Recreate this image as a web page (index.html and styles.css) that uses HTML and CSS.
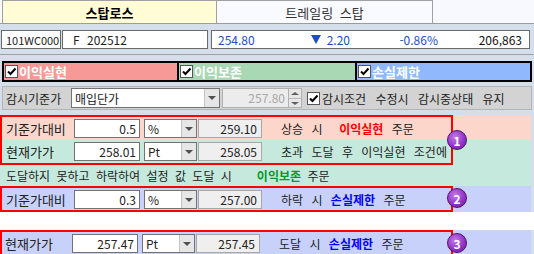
FILE: index.html
```html
<!DOCTYPE html>
<html lang="ko">
<head>
  <meta charset="UTF-8" />
  <title>스탑로스</title>
  <link rel="stylesheet" href="styles.css">
</head>
<body>
  <div class="tabs">
    <div class="tab active">스탑로스</div>
    <div class="tab">트레일링 스탑</div>
  </div>

  <div class="quote">
    <div class="box code">101WC000</div>
    <div class="box name">F 202512</div>
    <div class="box price">
      <span class="p-last">254.80</span>
      <span class="p-chg"><svg class="down" width="10" height="9" viewBox="0 0 10 9"><path d="M0 0H10L5 9Z"/></svg> 2.20</span>
      <span class="p-rate">-0.86%</span>
      <span class="p-vol">206,863</span>
    </div>
  </div>

  <div class="checks">
    <div class="seg seg-profit"><span class="cb"><svg width="11" height="11" viewBox="0 0 11 11"><path d="M2 5.5L4.5 8L9.5 2.5"/></svg></span>이익실현</div>
    <div class="seg seg-keep"><span class="cb"><svg width="11" height="11" viewBox="0 0 11 11"><path d="M2 5.5L4.5 8L9.5 2.5"/></svg></span>이익보존</div>
    <div class="seg seg-loss"><span class="cb"><svg width="11" height="11" viewBox="0 0 11 11"><path d="M2 5.5L4.5 8L9.5 2.5"/></svg></span>손실제한</div>
  </div>

  <div class="watch">
    <span class="watch-label">감시기준가</span>
    <div class="combo combo-wide"><span class="combo-text">매입단가</span><span class="dd"></span></div>
    <div class="spin-field">257.80</div>
    <div class="spin"><span class="spin-up"></span><span class="spin-down"></span></div>
    <span class="cb cb-watch"><svg width="11" height="11" viewBox="0 0 11 11"><path d="M2 5.5L4.5 8L9.5 2.5"/></svg></span>
    <span class="watch-text">감시조건 수정시 감시중상태 유지</span>
  </div>

  <div class="section s1">
    <div class="row row-top pink">
      <span class="lbl">기준가대비</span>
      <div class="num">0.5</div>
      <div class="combo"><span class="combo-text">%</span><span class="dd"></span></div>
      <div class="ro">259.10</div>
      <span class="desc">상승 시 &nbsp;<b class="red">이익실현</b> 주문</span>
    </div>
    <div class="row row-bottom green">
      <span class="lbl">현재가가</span>
      <div class="num">258.01</div>
      <div class="combo"><span class="combo-text">Pt</span><span class="dd"></span></div>
      <div class="ro">258.05</div>
      <span class="desc">초과 도달 후 이익실현 조건에</span>
    </div>
    <div class="mark"><span class="badge b1">1</span></div>
  </div>

  <div class="row note green">
    <span class="note-text">도달하지 못하고 하락하여 설정 값 도달 시</span>
    <span class="note-tail"><b class="grn">이익보존</b> 주문</span>
  </div>

  <div class="section s2">
    <div class="row lav">
      <span class="lbl">기준가대비</span>
      <div class="num">0.3</div>
      <div class="combo"><span class="combo-text">%</span><span class="dd"></span></div>
      <div class="ro">257.00</div>
      <span class="desc">하락 시 <b class="blu">손실제한</b> 주문</span>
    </div>
    <div class="mark"><span class="badge b2">2</span></div>
  </div>

  <div class="spacer"></div>

  <div class="section s3">
    <div class="row lav">
      <span class="lbl lbl-short">현재가가</span>
      <div class="num">257.47</div>
      <div class="combo"><span class="combo-text">Pt</span><span class="dd"></span></div>
      <div class="ro">257.45</div>
      <span class="desc">도달 시 <b class="blu">손실제한</b> 주문</span>
    </div>
    <div class="mark"><span class="badge b3">3</span></div>
  </div>
</body>
</html>
```

FILE: styles.css
```css
:root {
  --page: #d5dfec;
  --pink: #fcd6cb;
  --green: #c5e9dc;
  --lav: #c8d1f9;
  --field-border: #737373;
  --mark: #ff0000;
}
* { box-sizing: border-box; }
body {
  margin: 0;
  width: 534px;
  height: 254px;
  overflow: hidden;
  background: var(--page);
  font-family: "Noto Sans CJK KR", "Noto Sans", sans-serif;
  font-size: 12px;
  color: #222;
  word-spacing: 3px;
}

/* tabs */
.tabs {
  display: flex;
  height: 24px;
  padding-left: 2px;
  background: #f8f9fe;
  border-bottom: 1px solid #9c9c9c;
}
.tab {
  width: 216px;
  display: flex;
  align-items: center;
  justify-content: center;
  font-size: 13px;
  color: #333;
  background: #f9faff;
  border-top: 1px solid #a0a0a0;
  border-right: 1px solid #a0a0a0;
}
.tab.active {
  width: 215px;
  border-left: 1px solid #a0a0a0;
  background: #fffcd6;
  color: #000;
  font-weight: bold;
}

/* quote line */
.quote {
  display: flex;
  height: 31px;
  padding: 6px 0 0 1px;
  border-bottom: 1px solid #a0a0a0;
}
.box {
  height: 19px;
  display: flex;
  align-items: center;
  background: #fff;
  border: 1px solid #6a6a6a;
  word-spacing: 0;
}
.code { width: 60px; padding-left: 4px; font-size: 11px; overflow: hidden; }
.name { width: 146px; margin-left: 1px; padding-left: 10px; word-spacing: 4px; }
.price { width: 319px; margin-left: 3px; padding-left: 6px; color: #1d4fc4; }
.p-last { width: 42px; }
.p-chg { width: 90px; text-align: right; display: flex; justify-content: flex-end; align-items: center; gap: 6px; }
.down { fill: #1d4fc4; }
.p-rate { width: 88px; text-align: right; }
.p-vol { width: 84px; text-align: right; color: #111; }

/* option checks */
.checks {
  display: flex;
  width: 530px;
  height: 21px;
  margin: 6px 2px 0;
  border: 1px solid #000;
}
.seg {
  display: flex;
  align-items: center;
  gap: 1px;
  padding-left: 1px;
  border: 1px solid #000;
  color: #fff;
  font-size: 13px;
  font-weight: bold;
  word-spacing: 0;
}
.seg-profit { width: 175px; background: #f69997; }
.seg-keep { width: 178px; background: #a9d8b5; }
.seg-loss { width: 175px; background: #8fb8fd; }
.cb {
  width: 13px;
  height: 13px;
  flex: none;
  display: flex;
  align-items: center;
  justify-content: center;
  background: #fff;
  border: 1px solid #555;
}
.cb path { fill: none; stroke: #000; stroke-width: 2; }

/* watch base */
.watch {
  display: flex;
  align-items: center;
  width: 530px;
  height: 24px;
  margin: 4px 2px 0;
  background: #d3d3d3;
  border: 1px solid #b4b4b4;
}
.watch-label { width: 68px; padding-left: 3px; word-spacing: 0; }
.combo {
  display: flex;
  align-items: center;
  justify-content: space-between;
  width: 53px;
  height: 19px;
  margin-left: 4px;
  background: #fff;
  border: 1px solid var(--field-border);
}
.combo-wide { width: 149px; height: 20px; margin-left: 0; }
.combo-text { padding-left: 3px; }
.dd {
  position: relative;
  width: 15px;
  height: 100%;
  background: #e6e6e6;
  border-left: 1px solid #c4c4c4;
}
.dd::after {
  content: "";
  position: absolute;
  left: 3px;
  top: 7px;
  border-left: 4px solid transparent;
  border-right: 4px solid transparent;
  border-top: 4px solid #505050;
}
.spin-field {
  width: 67px;
  height: 20px;
  margin-left: 2px;
  padding-right: 3px;
  text-align: right;
  line-height: 18px;
  color: #a8a8a8;
  background: #ececec;
  border: 1px solid #b0b0b0;
}
.spin {
  display: flex;
  flex-direction: column;
  width: 13px;
  height: 20px;
  background: #e6e6e6;
  border: 1px solid #b0b0b0;
  border-left: 0;
}
.spin span { flex: 1; position: relative; }
.spin-up { border-bottom: 1px solid #b8b8b8; }
.spin-up::after, .spin-down::after {
  content: "";
  position: absolute;
  left: 2px;
  top: 3px;
  border-left: 4px solid transparent;
  border-right: 4px solid transparent;
}
.spin-up::after { border-bottom: 3px solid #606060; }
.spin-down::after { border-top: 3px solid #606060; }
.cb-watch { margin-left: 5px; }
.watch-text { margin-left: 2px; word-spacing: 6px; }

/* stop sections */
.section { position: relative; }
.s1 { margin-top: 5px; }
.row {
  display: flex;
  align-items: center;
  width: 531px;
  height: 25px;
}
.row-top { padding-top: 2px; }
.row-bottom { padding-bottom: 2px; }
.pink { background: var(--pink); }
.green { background: var(--green); }
.lav { background: var(--lav); }
.s2 .row, .s3 .row { height: 26px; padding: 2px 0; }
.lbl { width: 74px; padding-left: 6px; font-size: 13px; word-spacing: 0; }
.lbl-short { width: 72px; padding-left: 5px; }
.num {
  width: 66px;
  height: 19px;
  padding-right: 3px;
  text-align: right;
  line-height: 17px;
  background: #fff;
  border: 1px solid var(--field-border);
}
.ro {
  width: 64px;
  height: 19px;
  margin-left: 1px;
  padding-right: 4px;
  text-align: right;
  line-height: 17px;
  background: #efefef;
  border: 1px solid #a8a8a8;
}
.desc { margin-left: 19px; word-spacing: 5px; }
.note { height: 21px; padding-left: 6px; }
.note-tail { margin-left: 25px; }
.red { color: #ff0000; }
.grn { color: #009a2e; }
.blu { color: #0000ff; }
.spacer { height: 18px; background: #fff; }

/* annotation frames */
.mark {
  position: absolute;
  left: 0;
  top: 0;
  bottom: 0;
  width: 453px;
  border: 2px solid var(--mark);
  pointer-events: none;
}
.badge {
  position: absolute;
  right: -16px;
  width: 20px;
  height: 20px;
  display: flex;
  align-items: center;
  justify-content: center;
  border-radius: 50%;
  background: radial-gradient(circle at 40% 35%, #c77ae9, #8e30c4 60%, #6b1b99);
  border: 1px solid #4d1272;
  color: #fff;
  font-size: 12px;
  font-weight: bold;
}
.b1 { top: 13px; }
.b2 { top: 0; }
.b3 { top: 1px; }
```
